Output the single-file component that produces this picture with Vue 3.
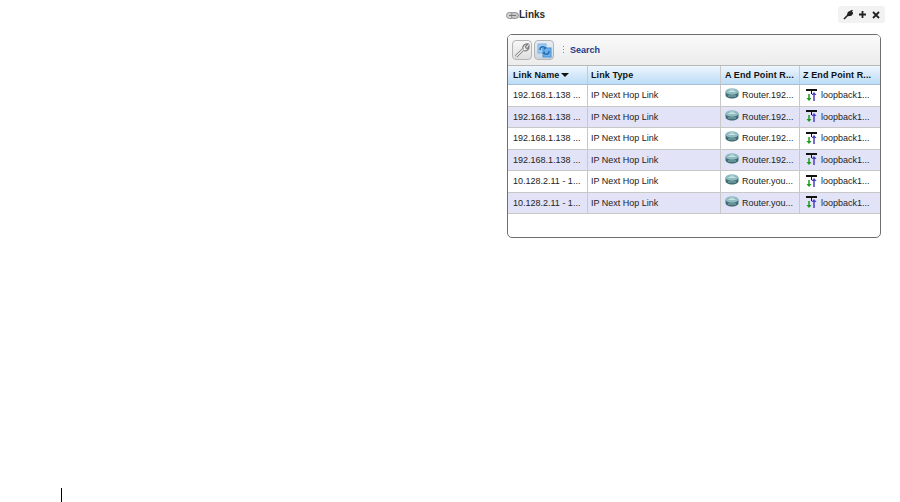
<script setup>
const columns = [
  { label: 'Link Name', sorted: true },
  { label: 'Link Type' },
  { label: 'A End Point R...' },
  { label: 'Z End Point R...' },
]
const rows = [
  { name: '192.168.1.138 ...', a: 'Router.192...' },
  { name: '192.168.1.138 ...', a: 'Router.192...' },
  { name: '192.168.1.138 ...', a: 'Router.192...' },
  { name: '192.168.1.138 ...', a: 'Router.192...' },
  { name: '10.128.2.11 - 1...', a: 'Router.you...' },
  { name: '10.128.2.11 - 1...', a: 'Router.you...' },
]
</script>

<template>
  <div class="page">
    <section class="portlet">
      <header class="title-bar">
        <svg class="link-icon" width="13" height="7" viewBox="0 0 13 7">
          <rect x="0.5" y="0.5" width="7.5" height="6" rx="3" fill="#d4d4d4" stroke="#8f8f8f" />
          <rect x="5" y="0.5" width="7.5" height="6" rx="3" fill="#c8c8c8" stroke="#8f8f8f" />
          <path d="M3 3.5h7" stroke="#777" stroke-width="1" />
        </svg>
        <span class="title">Links</span>
        <div class="controls">
          <svg width="10" height="10" viewBox="0 0 10 10">
            <path d="M1 9 L5 5 M4.5 5.5 L5.5 2.5 L8.5 1 L7 3.5 L9.5 3 L8 5 L5 5.5" fill="#222" stroke="#222" stroke-width="1.6" />
          </svg>
          <svg width="9" height="9" viewBox="0 0 9 9">
            <path d="M4.5 1v7M1 4.5h7" stroke="#222" stroke-width="1.8" />
          </svg>
          <svg width="8" height="8" viewBox="0 0 8 8">
            <path d="M1 1l6 6M7 1l-6 6" stroke="#222" stroke-width="1.8" />
          </svg>
        </div>
      </header>

      <div class="card">
        <div class="toolbar">
          <button class="tool">
            <svg width="18" height="18" viewBox="0 0 18 18">
              <path d="M3 15.5 L10 8.5 M10 8.5 C9 5 11.5 2.5 15 3 L12.5 5.5 L13 7 L14.5 7.5 L16 5 C16.5 8.5 13.5 10.5 10.5 9.5" fill="#f2f2f2" stroke="#808080" stroke-width="1.3" />
              <path d="M3 15.5 L10 8.5" stroke="#808080" stroke-width="3" />
              <path d="M3 15.5 L10 8.5" stroke="#eee" stroke-width="1.2" />
            </svg>
          </button>
          <button class="tool tool-blue">
            <svg width="17" height="17" viewBox="0 0 17 17">
              <rect x="2" y="2" width="8" height="9" fill="#9ccbf0" stroke="#7db2e2" />
              <rect x="7" y="6" width="8" height="9" fill="#6fb0e8" stroke="#4a90d0" />
              <path d="M4 8 C4 4 8 4 9 6 M13 9 C13 13 9 13 8 11" fill="none" stroke="#1f6cb4" stroke-width="1.4" />
              <path d="M7.5 4.5l3 1-2 2.5zM9.5 12.5l-3-1 2-2.5z" fill="#1f6cb4" />
            </svg>
          </button>
          <span class="grip"></span>
          <a class="search">Search</a>
        </div>

        <div class="table">
          <div class="row head">
            <div v-for="c in columns" :key="c.label" class="cell">
              {{ c.label }}<i v-if="c.sorted" class="sort"></i>
            </div>
          </div>
          <div v-for="(r, i) in rows" :key="i" class="row" :class="{ alt: i % 2 }">
            <div class="cell">{{ r.name }}</div>
            <div class="cell">IP Next Hop Link</div>
            <div class="cell">
              <svg class="ic router" width="14" height="11" viewBox="0 0 14 11">
                <path d="M0.5 3.5v3.5c0 2 3 3.5 6.500 3.500s6.500-1.500 6.500-3.500V3.500z" fill="#3f6f74" />
                <ellipse cx="7" cy="3.5" rx="6.500" ry="3.200" fill="#8fbcc0" />
                <path d="M3.500 3.500h7M5 2.200h4" stroke="#c8e2e4" />
                <path d="M3 8h8" stroke="#8fb4b8" />
              </svg>
              <span>{{ r.a }}</span>
            </div>
            <div class="cell">
              <svg class="ic loop" width="13" height="14" viewBox="0 0 13 14">
                <path d="M1 1h11v2H1z" fill="#111" />
                <path d="M6.500 3v3" stroke="#111" />
                <path d="M4 6v6" stroke="#1c9a1c" stroke-width="1.500" />
                <path d="M1.500 10L4 13l2.500-3z" fill="#1c9a1c" />
                <path d="M9 13V6" stroke="#4a3fc0" stroke-width="1.500" />
                <path d="M6.500 7L9 4l2.500 3z" fill="#4a3fc0" />
              </svg>
              <span>loopback1...</span>
            </div>
          </div>
        </div>
      </div>
    </section>
    <div class="mark"></div>
  </div>
</template>

<style>
html, body { margin: 0; background: #fff; }
</style>

<style scoped>
.page {
  width: 900px;
  height: 502px;
  display: flex;
  flex-direction: column;
  justify-content: space-between;
  overflow: hidden;
  font-family: "Liberation Sans", Arial, sans-serif;
  font-size: 9px;
  color: #222;
}
.portlet {
  width: 380px;
  margin: 6px 0 0 505px;
}
.title-bar {
  height: 17px;
  display: flex;
  align-items: center;
}
.link-icon { margin: 1px 0 0 1px; }
.title {
  font: 700 10px "Liberation Sans", Arial, sans-serif;
  color: #2a2a2a;
  margin-top: -1px;
}
.controls {
  margin-left: auto;
  width: 47px;
  height: 17px;
  background: #f2f2f2;
  border-radius: 3px;
  display: flex;
  align-items: center;
  justify-content: space-around;
  padding: 0 2px;
  box-sizing: border-box;
}
.card {
  margin: 11px 0 0 2px;
  width: 374px;
  height: 204px;
  box-sizing: border-box;
  border: 1px solid #6e6e6e;
  border-radius: 5px;
  overflow: hidden;
}
.toolbar {
  height: 30px;
  display: flex;
  align-items: center;
  gap: 2px;
  padding-left: 4px;
  background: linear-gradient(#fafafa, #ececec);
}
.tool {
  width: 20px;
  height: 20px;
  padding: 0;
  border: 1px solid #b4b4b4;
  border-radius: 4px;
  background: linear-gradient(#f8f8f8, #dedede);
  display: flex;
  align-items: center;
  justify-content: center;
}
.tool-blue { background: linear-gradient(#e8eef4, #c9d6e2); }
.grip {
  width: 1px;
  height: 9px;
  margin: 0 4px 0 7px;
  background: repeating-linear-gradient(#888 0 1px, transparent 1px 3px);
}
.search {
  color: #1a3a8c;
  font-weight: 700;
  font-size: 9px;
}
.row {
  display: grid;
  grid-template-columns: 80px 133px 79px 80px;
  height: 21.5px;
  box-sizing: border-box;
  border-bottom: 1px solid #c8c8c8;
}
.row.alt { background: #e2e3f6; }
.row.head {
  height: 20px;
  font-weight: 700;
  color: #111;
  background: linear-gradient(#eef6fd, #bcdcf6);
  border-top: 1px solid #b8b8b8;
  border-bottom: 1px solid #a8c0d6;
}
.row.head .cell { letter-spacing: 0.1px; }
.cell {
  display: flex;
  align-items: center;
  padding-left: 3px;
  border-right: 1px solid #c8c8c8;
  white-space: pre;
  overflow: hidden;
}
.row .cell:first-child { padding-left: 5px; }
.row .cell:nth-child(3) { padding-left: 4px; }
.row:not(.head) .cell:last-child { padding-left: 5px; }
.row .cell:last-child { border-right: 0; }
.sort {
  width: 0;
  height: 0;
  border: 4px solid transparent;
  border-top: 4px solid #111;
  border-bottom: 0;
  margin-left: 2px;
}
.ic { flex: none; margin-right: 3px; }
.router { margin-top: -3px; }
.loop { margin-top: -1px; }
.mark {
  width: 1px;
  height: 14px;
  margin-left: 61px;
  background: #000;
}
</style>
